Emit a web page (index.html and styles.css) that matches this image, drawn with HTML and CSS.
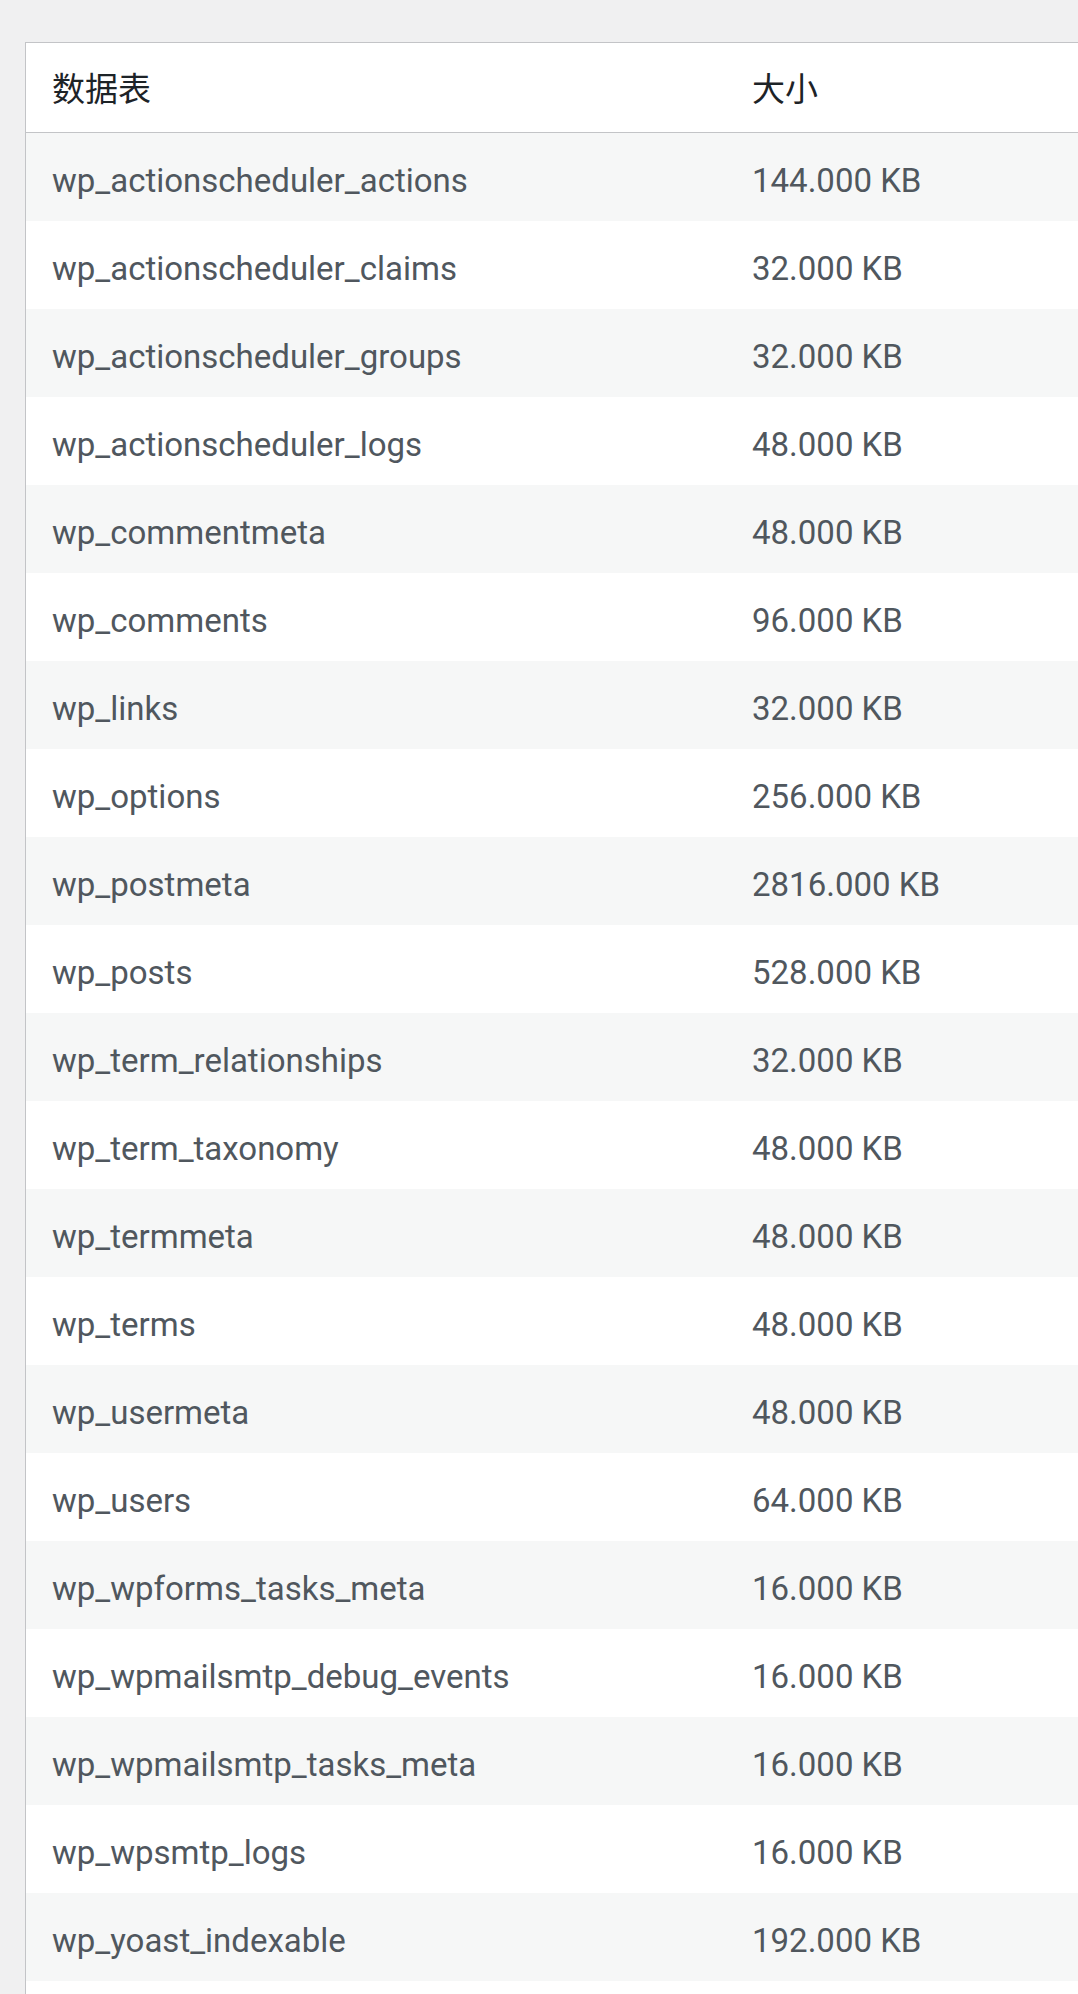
FILE: index.html
```html
<!DOCTYPE html>
<html lang="zh-CN">
<head>
<meta charset="utf-8">
<title>数据表</title>
<link rel="stylesheet" href="styles.css">
</head>
<body>
<div class="wrap">
<table class="db-table">
<thead>
<tr><th class="col-name">数据表</th><th class="col-size">大小</th></tr>
</thead>
<tbody>
<tr><td>wp_actionscheduler_actions</td><td>144.000 KB</td></tr>
<tr><td>wp_actionscheduler_claims</td><td>32.000 KB</td></tr>
<tr><td>wp_actionscheduler_groups</td><td>32.000 KB</td></tr>
<tr><td>wp_actionscheduler_logs</td><td>48.000 KB</td></tr>
<tr><td>wp_commentmeta</td><td>48.000 KB</td></tr>
<tr><td>wp_comments</td><td>96.000 KB</td></tr>
<tr><td>wp_links</td><td>32.000 KB</td></tr>
<tr><td>wp_options</td><td>256.000 KB</td></tr>
<tr><td>wp_postmeta</td><td>2816.000 KB</td></tr>
<tr><td>wp_posts</td><td>528.000 KB</td></tr>
<tr><td>wp_term_relationships</td><td>32.000 KB</td></tr>
<tr><td>wp_term_taxonomy</td><td>48.000 KB</td></tr>
<tr><td>wp_termmeta</td><td>48.000 KB</td></tr>
<tr><td>wp_terms</td><td>48.000 KB</td></tr>
<tr><td>wp_usermeta</td><td>48.000 KB</td></tr>
<tr><td>wp_users</td><td>64.000 KB</td></tr>
<tr><td>wp_wpforms_tasks_meta</td><td>16.000 KB</td></tr>
<tr><td>wp_wpmailsmtp_debug_events</td><td>16.000 KB</td></tr>
<tr><td>wp_wpmailsmtp_tasks_meta</td><td>16.000 KB</td></tr>
<tr><td>wp_wpsmtp_logs</td><td>16.000 KB</td></tr>
<tr><td>wp_yoast_indexable</td><td>192.000 KB</td></tr>
<tr class="tail"><td></td><td></td></tr>
</tbody>
</table>
</div>
</body>
</html>
```

FILE: styles.css
```css
html, body {
  margin: 0;
  padding: 0;
  background: #f0f0f1;
  overflow: hidden;
}
body {
  font-family: Roboto, "Noto Sans CJK SC", sans-serif;
}
.wrap {
  padding: 42px 0 0 25px;
  width: 1300px;
}
.db-table {
  border-collapse: separate;
  border-spacing: 0;
  width: 1250px;
  background: #fff;
  border: 1px solid #c3c4c7;
  table-layout: fixed;
}
.db-table th {
  text-align: left;
  font-weight: 400;
  font-size: 33px;
  line-height: 48px;
  color: #1d2327;
  padding: 23px 25px 18px 26px;
  border-bottom: 1px solid #c3c4c7;
}
.db-table .col-name {
  width: 649px;
}
.db-table td {
  font-size: 33px;
  line-height: 48px;
  height: 48px;
  color: #50575e;
  padding: 24px 25px 16px 26px;
  white-space: nowrap;
}
.db-table tbody tr:nth-child(odd) td {
  background: #f6f7f7;
}
```
